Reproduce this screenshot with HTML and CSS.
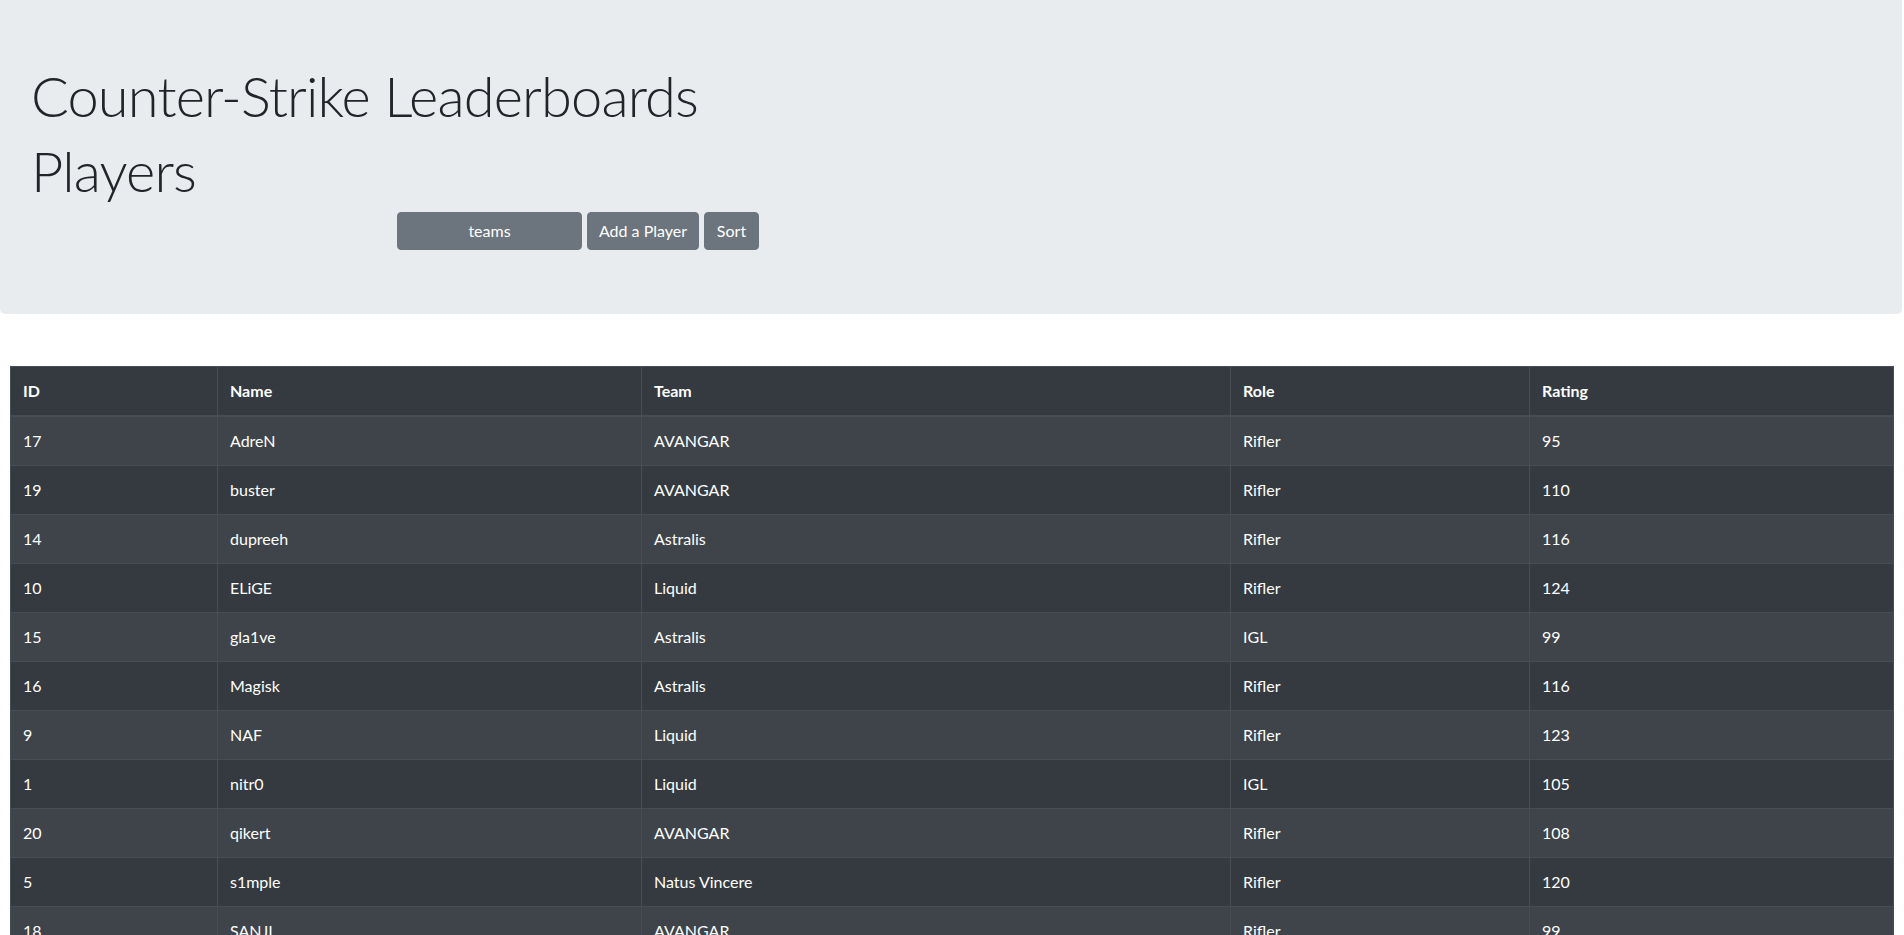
FILE: index.html
```html
<!DOCTYPE html>
<html lang="en">
<head>
<meta charset="utf-8">
<title>Counter-Strike Leaderboards</title>
<link rel="stylesheet" href="styles.css">
</head>
<body>
<div class="jumbotron">
  <h1 class="display">Counter-Strike Leaderboards</h1>
  <h1 class="display">Players</h1>
  <div class="toolbar">
    <button class="btn btn-teams">teams</button>
    <button class="btn btn-add">Add a Player</button>
    <button class="btn btn-sort">Sort</button>
  </div>
</div>
<table class="players">
  <colgroup>
    <col class="c-id"><col class="c-name"><col class="c-team"><col class="c-role"><col class="c-rating">
  </colgroup>
  <thead>
    <tr><th>ID</th><th>Name</th><th>Team</th><th>Role</th><th>Rating</th></tr>
  </thead>
  <tbody>
    <tr><td>17</td><td>AdreN</td><td>AVANGAR</td><td>Rifler</td><td>95</td></tr>
    <tr><td>19</td><td>buster</td><td>AVANGAR</td><td>Rifler</td><td>110</td></tr>
    <tr><td>14</td><td>dupreeh</td><td>Astralis</td><td>Rifler</td><td>116</td></tr>
    <tr><td>10</td><td>ELiGE</td><td>Liquid</td><td>Rifler</td><td>124</td></tr>
    <tr><td>15</td><td>gla1ve</td><td>Astralis</td><td>IGL</td><td>99</td></tr>
    <tr><td>16</td><td>Magisk</td><td>Astralis</td><td>Rifler</td><td>116</td></tr>
    <tr><td>9</td><td>NAF</td><td>Liquid</td><td>Rifler</td><td>123</td></tr>
    <tr><td>1</td><td>nitr0</td><td>Liquid</td><td>IGL</td><td>105</td></tr>
    <tr><td>20</td><td>qikert</td><td>AVANGAR</td><td>Rifler</td><td>108</td></tr>
    <tr><td>5</td><td>s1mple</td><td>Natus Vincere</td><td>Rifler</td><td>120</td></tr>
    <tr><td>18</td><td>SANJI</td><td>AVANGAR</td><td>Rifler</td><td>99</td></tr>
  </tbody>
</table>
</body>
</html>
```
FILE: styles.css
```css
html, body {
  margin: 0;
  padding: 0;
  background: #fff;
}
body {
  font-family: "Lato", "Open Sans", "Liberation Sans", sans-serif;
  font-size: 16px;
  line-height: 24px;
  color: #212529;
}
.jumbotron {
  width: 1902px;
  box-sizing: border-box;
  background: #e9ecef;
  border-radius: 0 0 5px 5px;
  padding: 62px 21px 64px 31px;
  margin-bottom: 52px;
}
.display {
  margin: 0 0 8px 0;
  font-size: 56px;
  line-height: 67px;
  font-weight: 300;
  letter-spacing: -0.85px;
  color: #212529;
}
.toolbar {
  display: flex;
  gap: 5px;
  margin-left: 366px;
}
.btn {
  height: 38px;
  box-sizing: border-box;
  border: 1px solid #6c757d;
  background: #6c757d;
  color: #fff;
  font-family: inherit;
  font-size: 16px;
  line-height: 24px;
  border-radius: 4px;
  padding: 6px 12px;
  text-align: center;
}
.btn-teams { width: 185px; }
.btn-add { width: 112px; padding: 6px 0; }
.btn-sort { width: 55px; padding: 6px 0; }
.players {
  margin-left: 10px;
  width: 1883px;
  border-collapse: collapse;
  table-layout: fixed;
  background: #343a40;
  color: #fff;
}
.c-id { width: 207px; }
.c-name { width: 424px; }
.c-team { width: 589px; }
.c-role { width: 299px; }
.c-rating { width: 364px; }
.players th, .players td {
  text-align: left;
  padding: 12px;
  border: 1px solid #454d55;
  line-height: 24px;
  font-size: 16px;
}
.players th {
  font-weight: 700;
  border-bottom-width: 2px;
}
.players td {
  font-weight: 400;
}
.players tbody tr:nth-child(odd) {
  background: #3e444a;
}
```
